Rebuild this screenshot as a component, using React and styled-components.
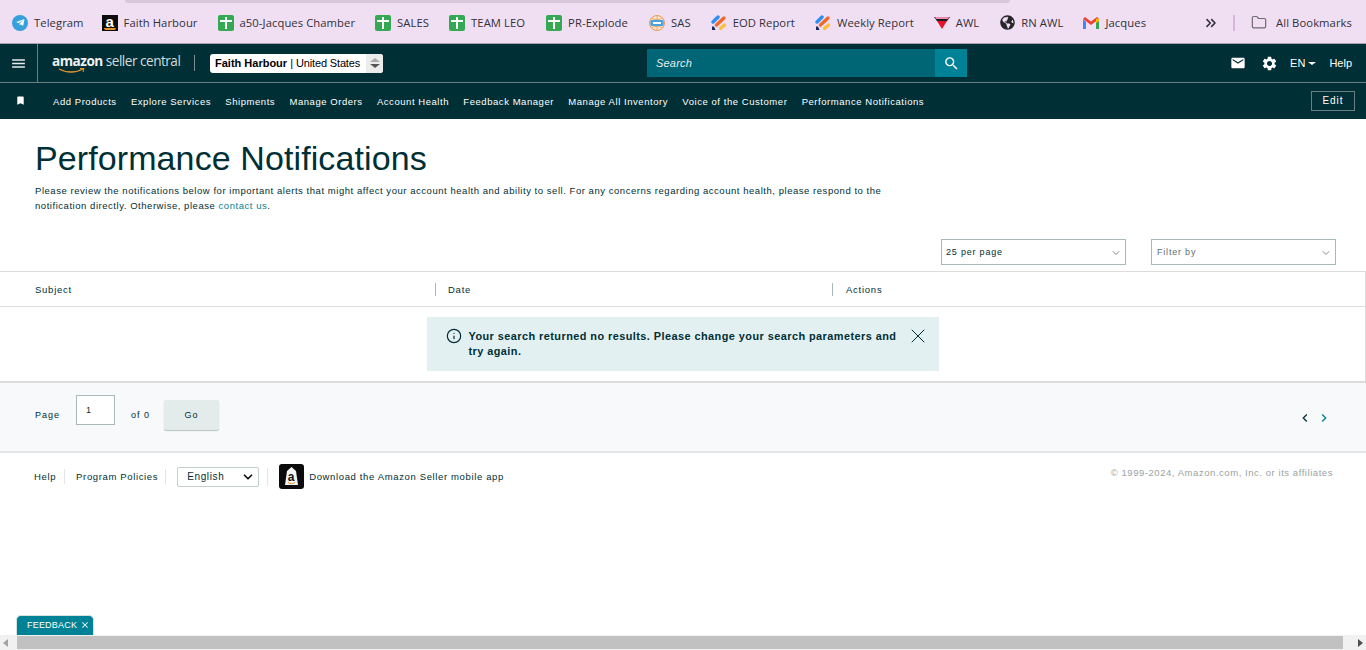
import styled, { createGlobalStyle } from 'styled-components';
import { MdEmail, MdSettings, MdSearch, MdMenu, MdBookmark, MdClose, MdChevronLeft, MdChevronRight } from 'react-icons/md';
import { FaGlobeAmericas, FaTelegramPlane } from 'react-icons/fa';
import { Folder, ChevronsRight, Info, X, ChevronDown } from 'lucide-react';

const GlobalStyle = createGlobalStyle`
  html, body {
    margin: 0;
    padding: 0;
    background: #fff;
    overflow: hidden;
  }
  * { box-sizing: border-box; }
`;

const Page = styled.div`
  position: relative;
  width: 1366px;
  height: 650px;
  display: flex;
  flex-direction: column;
  overflow: hidden;
  font-family: "Liberation Sans", Arial, sans-serif;
  color: #002f36;
`;

const BookmarkBar = styled.div`
  position: relative;
  height: 44px;
  flex: none;
  background: #f0dff3;
  border-bottom: 1px solid #a9a3ad;
  display: flex;
  align-items: center;
  padding: 2px 14px 0 12px;
  font-family: "Open Sans", sans-serif;
  font-size: 11.25px;
  letter-spacing: 0.07px;
  color: #33303a;
`;

const TabEdge = styled.div`
  position: absolute;
  top: 0;
  left: 125px;
  width: 885px;
  height: 3px;
  background: #d9c6dc;
  border-radius: 0 0 8px 8px;
`;

const Mark = styled.div`
  display: flex;
  align-items: center;
  gap: 6px;
  margin-right: ${(p) => p.$gap ?? 20}px;
  white-space: nowrap;
`;

const MarkIcon = styled.span`
  width: 16px;
  height: 16px;
  flex: none;
  display: flex;
  align-items: center;
  justify-content: center;
`;

const GreenTile = styled.span`
  width: 16px;
  height: 16px;
  background: #34a853;
  border-radius: 2px;
  display: block;
  position: relative;
  &::before {
    content: "";
    position: absolute;
    left: 2px;
    right: 2px;
    top: 5px;
    height: 2px;
    background: #fff;
  }
  &::after {
    content: "";
    position: absolute;
    left: 7px;
    top: 2px;
    bottom: 2px;
    width: 2px;
    background: #fff;
  }
`;

const TelegramDot = styled.span`
  width: 16px;
  height: 16px;
  border-radius: 50%;
  background: #37a0dc;
  color: #fff;
  font-size: 9px;
  display: flex;
  align-items: center;
  justify-content: center;
`;

const AmazonTile = styled.span`
  width: 16px;
  height: 16px;
  background: #0c0c0c;
  color: #fff;
  font: bold 15px/13px "Liberation Sans", sans-serif;
  display: block;
  text-align: center;
  position: relative;
  &::after {
    content: "";
    position: absolute;
    left: 2px;
    right: 2px;
    bottom: 1px;
    height: 2px;
    border-radius: 0 0 6px 6px;
    background: #e8932c;
  }
`;

const MoreBtn = styled.div`
  margin-left: auto;
  display: flex;
  align-items: center;
  color: #33303a;
`;

const BarDivider = styled.span`
  width: 2px;
  height: 16px;
  background: #dcb4de;
  margin: 0 16px 0 14px;
`;

const TopNav = styled.div`
  height: 39px;
  flex: none;
  background: #002f36;
  border-bottom: 1px solid #6c7f80;
  display: grid;
  grid-template-columns: 647px 320px 1fr;
  align-items: center;
  color: #fff;
`;

const NavLeft = styled.div`
  display: flex;
  align-items: center;
  height: 100%;
`;

const Burger = styled.div`
  width: 38px;
  height: 100%;
  border-right: 1px solid #6c7f80;
  display: flex;
  align-items: center;
  justify-content: center;
  color: #e6eaea;
`;

const Logo = styled.div`
  position: relative;
  margin-left: 14px;
  width: 129px;
  height: 24px;
  font-family: "Open Sans", sans-serif;
  font-size: 13.6px;
  line-height: 18px;
  letter-spacing: -0.5px;
  color: #d3dcdc;
  white-space: nowrap;
  padding-top: 1px;
  b { font-weight: 700; color: #eef2f2; }
  svg { position: absolute; left: 6px; top: 17px; }
`;

const LogoRule = styled.span`
  width: 1px;
  height: 16px;
  background: #7c8f90;
  margin: 0 15px 0 13px;
`;

const AccountPick = styled.div`
  width: 173px;
  height: 19px;
  background: #fff;
  border-radius: 3px;
  color: #000;
  font-size: 11px;
  display: flex;
  align-items: center;
  padding-left: 5px;
  position: relative;
  white-space: nowrap;
  b { font-weight: 700; margin-right: 3px; }
  span { margin-left: 3px; letter-spacing: -0.15px; }
`;

const Stepper = styled.div`
  position: absolute;
  right: 0;
  top: 0;
  bottom: 0;
  width: 17px;
  background: #ececec;
  border-radius: 0 3px 3px 0;
  display: flex;
  flex-direction: column;
  align-items: center;
  justify-content: center;
  gap: 2px;
`;

const Tri = styled.i`
  width: 0;
  height: 0;
  border-left: 5px solid transparent;
  border-right: 5px solid transparent;
  ${(p) => (p.$up ? 'border-bottom: 4px solid #aaa;' : 'border-top: 4px solid #555;')}
`;

const Search = styled.div`
  height: 28px;
  background: #006574;
  display: flex;
  align-items: stretch;
  font-size: 11px;
  font-style: italic;
  letter-spacing: 0.2px;
  color: #e6eeee;
`;

const SearchText = styled.div`
  flex: 1;
  display: flex;
  align-items: center;
  padding-left: 9px;
`;

const SearchBtn = styled.div`
  width: 32px;
  background: #008296;
  display: flex;
  align-items: center;
  justify-content: center;
  color: #fff;
`;

const NavRight = styled.div`
  display: flex;
  align-items: center;
  justify-content: flex-end;
  padding-right: 14px;
  font-size: 11px;
`;

const Lang = styled.span`
  display: flex;
  align-items: center;
  gap: 3px;
  margin: 0 13px 0 12px;
`;

const Caret = styled.i`
  width: 0;
  height: 0;
  border-left: 4px solid transparent;
  border-right: 4px solid transparent;
  border-top: 3px solid #fff;
`;

const SubNav = styled.div`
  height: 36px;
  flex: none;
  background: #002f36;
  display: flex;
  align-items: center;
  padding: 1px 11px 0 15px;
  color: #fff;
  font-size: 9.5px;
  letter-spacing: 0.55px;
  white-space: nowrap;
`;

const Pin = styled.span`
  display: flex;
  width: 38px;
  margin-top: -3px;
`;

const NavLink = styled.a`
  margin-right: 14.3px;
`;

const EditBtn = styled.div`
  margin-left: auto;
  width: 44px;
  height: 20px;
  border: 1px solid #6c7f80;
  display: flex;
  align-items: center;
  justify-content: center;
  font-size: 10px;
  letter-spacing: 1px;
  margin-top: -2px;
`;

const Header = styled.div`
  padding: 18px 34px 0 35px;
`;

const Title = styled.h1`
  margin: 0;
  font-size: 34px;
  line-height: 42px;
  font-weight: 400;
  letter-spacing: 0.1px;
  color: #002f36;
`;

const Intro = styled.p`
  margin: 4px 0 0 0;
  width: 850px;
  font-size: 9.5px;
  line-height: 15px;
  letter-spacing: 0.54px;
  color: #002f36;
  a { color: #008296; }
`;

const Filters = styled.div`
  display: flex;
  justify-content: flex-end;
  gap: 25px;
  padding: 26px 30px 6px 0;
`;

const Pick = styled.div`
  width: 185px;
  height: 26px;
  border: 1px solid #a9b8b8;
  display: flex;
  align-items: center;
  justify-content: space-between;
  padding: 0 3px 0 ${(p) => p.$pad ?? 4}px;
  font-size: 9px;
  letter-spacing: 0.8px;
  color: ${(p) => p.$color ?? '#002f36'};
  svg { color: #7f8f90; margin-top: 2px; }
`;

const Table = styled.div`
  border: 1px solid #dcdcdc;
  border-bottom-width: 2px;
  border-left: 0;
`;

const HeadRow = styled.div`
  height: 35px;
  display: flex;
  align-items: center;
  border-bottom: 1px solid #d9dede;
  font-size: 9.5px;
  letter-spacing: 0.75px;
`;

const HeadCell = styled.div`
  width: ${(p) => p.$w}px;
  display: flex;
  align-items: center;
  height: 13px;
  padding-left: ${(p) => p.$pad ?? 12}px;
  border-left: ${(p) => (p.$rule ? '1px solid #a9b8b8' : '0')};
`;

const BodyRow = styled.div`
  height: 74px;
  display: flex;
  justify-content: center;
  padding-top: 10px;
`;

const Alert = styled.div`
  width: 512px;
  height: 54px;
  background: #e3f0f2;
  display: flex;
  align-items: flex-start;
  padding: 12px 0 0 19px;
  font-size: 10.9px;
  font-weight: 700;
  line-height: 15px;
  letter-spacing: 0.45px;
  color: #002f36;
  > svg { margin-top: -1px; flex: none; }
`;

const AlertText = styled.div`
  width: 433px;
  margin-left: 7px;
`;

const AlertClose = styled.div`
  margin: -5px 0 0 4px;
  display: flex;
`;

const Pager = styled.div`
  height: 70px;
  flex: none;
  background: #f7f9fa;
  border-bottom: 2px solid #e3e6e8;
  display: flex;
  align-items: center;
  padding: 0 34px 4px 35px;
  font-size: 9px;
  letter-spacing: 1px;
`;

const PageBox = styled.div`
  width: 39px;
  height: 30px;
  background: #fff;
  border: 1px solid #a9b8b8;
  margin: -10px 16px 0 16px;
  padding: 9px 0 0 9px;
`;

const GoBtn = styled.div`
  width: 55px;
  height: 30px;
  margin-left: 14px;
  background: #e3ebeb;
  border-radius: 2px;
  box-shadow: 0 1px 1px #b8c4c4;
  display: flex;
  align-items: center;
  justify-content: center;
`;

const Arrows = styled.div`
  margin-left: auto;
  display: flex;
  gap: 3px;
  margin-top: 6px;
`;

const Arrow = styled.span`
  display: flex;
  color: ${(p) => p.$color};
`;

const Footer = styled.div`
  display: flex;
  justify-content: space-between;
  align-items: flex-start;
  padding: 11px 33px 0 34px;
  font-size: 9.5px;
  letter-spacing: 0.64px;
`;

const FooterLeft = styled.div`
  display: flex;
  align-items: center;
`;

const FooterLink = styled.span`
  padding-right: ${(p) => p.$right ?? 8}px;
  margin-right: ${(p) => p.$margin ?? 11}px;
  border-right: 1px solid #e3e6e6;
  line-height: 15px;
`;

const LangPick = styled.div`
  width: 82px;
  height: 20px;
  border: 1px solid #c5cccc;
  border-radius: 2px;
  display: flex;
  align-items: center;
  justify-content: space-between;
  padding: 0 3px 0 9px;
  font-size: 10px;
  color: #002f36;
  margin-right: 8px;
`;

const FooterRule = styled.span`
  width: 1px;
  height: 18px;
  background: #e3e6e6;
  margin-right: 11px;
`;

const AppTile = styled.span`
  width: 25px;
  height: 25px;
  border-radius: 3px;
  background: #0b0b0b;
  display: flex;
  align-items: center;
  justify-content: center;
  margin-right: 5px;
`;

const Copy = styled.div`
  color: #9aa2a2;
  font-size: 9.5px;
  letter-spacing: 0.55px;
  margin-top: 3px;
`;

const Spacer = styled.div`
  flex: 1;
`;

const Scrollbar = styled.div`
  height: 15px;
  flex: none;
  background: #f1f1f1;
  display: flex;
  align-items: center;
  justify-content: space-between;
  padding: 0 3px;
`;

const Thumb = styled.div`
  position: absolute;
  left: 17px;
  right: 23px;
  bottom: 1px;
  height: 13px;
  background: #c1c1c1;
`;

const ScrollArrow = styled.i`
  width: 0;
  height: 0;
  border-top: 4px solid transparent;
  border-bottom: 4px solid transparent;
  ${(p) => (p.$right ? 'border-left: 5px solid #505050;' : 'border-right: 5px solid #a3a3a3;')}
`;

const FeedbackTab = styled.div`
  position: absolute;
  left: 16px;
  bottom: 15px;
  width: 78px;
  height: 20px;
  background: #008296;
  border: 1px solid #d5e2e4;
  border-bottom: 0;
  border-radius: 5px 5px 0 0;
  color: #fff;
  font-size: 9px;
  letter-spacing: 0.2px;
  display: flex;
  align-items: center;
  padding: 0 0 2px 10px;
  gap: 3px;
`;

const greenMarks = [
  { label: 'a50-Jacques Chamber', gap: 20 },
  { label: 'SALES', gap: 20 },
  { label: 'TEAM LEO', gap: 21 },
  { label: 'PR-Explode', gap: 21 },
];

const navItems = [
  'Add Products',
  'Explore Services',
  'Shipments',
  'Manage Orders',
  'Account Health',
  'Feedback Manager',
  'Manage All Inventory',
  'Voice of the Customer',
  'Performance Notifications',
];

function SasIcon() {
  return (
    <svg width="16" height="16" viewBox="0 0 16 16">
      <circle cx="8" cy="8" r="7.5" fill="#fbe3cc" stroke="#e89a5c" />
      <path d="M8 1V15M1 8H15M3 3.5C6 5 10 5 13 3.5M3 12.5C6 11 10 11 13 12.5" stroke="#e89a5c" fill="none" strokeWidth="0.8" />
      <rect x="1.5" y="5" width="13" height="6" rx="1" fill="#4ba3dd" />
      <rect x="4" y="7" width="8" height="2" fill="#fff" />
    </svg>
  );
}

function ReportIcon() {
  return (
    <svg width="16" height="16" viewBox="0 0 16 16">
      <path d="M1 15V11.5L3 11.5 4.5 15Z" fill="#1a2a5e" />
      <path d="M2 7L7 2" stroke="#2f8ef4" strokeWidth="3.4" strokeLinecap="round" />
      <path d="M5.5 10L13 3" stroke="#f2692c" strokeWidth="3.4" strokeLinecap="round" />
      <path d="M9.5 13.5L13.5 10" stroke="#fbbf3a" strokeWidth="3.4" strokeLinecap="round" />
    </svg>
  );
}

function AwlIcon() {
  return (
    <svg width="16" height="14" viewBox="0 0 16 14">
      <path d="M0 1H16L13 5H3Z" fill="#1a1a1a" />
      <path d="M1 1H15L14 3H2Z" fill="#ef8bb0" />
      <path d="M3 5H13L8 13Z" fill="#e4142c" />
    </svg>
  );
}

function GmailIcon() {
  return (
    <svg width="16" height="12" viewBox="0 0 16 12">
      <path d="M0 2V12H3V5Z" fill="#4285f4" />
      <path d="M13 5V12H16V2Z" fill="#34a853" />
      <path d="M0 2L8 8 16 2 14 0 8 4.5 2 0Z" fill="#ea4335" />
      <path d="M13 1.5L16 2V4L13 6Z" fill="#fbbc04" />
    </svg>
  );
}

function App() {
  return (
    <Page>
      <GlobalStyle />
      <BookmarkBar>
        <TabEdge />
        <Mark $gap={18}>
          <MarkIcon><TelegramDot><FaTelegramPlane /></TelegramDot></MarkIcon>
          Telegram
        </Mark>
        <Mark>
          <MarkIcon><AmazonTile>a</AmazonTile></MarkIcon>
          Faith Harbour
        </Mark>
        {greenMarks.map((mark) => (
          <Mark key={mark.label} $gap={mark.gap}>
            <MarkIcon><GreenTile /></MarkIcon>
            {mark.label}
          </Mark>
        ))}
        <Mark>
          <MarkIcon><SasIcon /></MarkIcon>
          SAS
        </Mark>
        <Mark>
          <MarkIcon><ReportIcon /></MarkIcon>
          EOD Report
        </Mark>
        <Mark>
          <MarkIcon><ReportIcon /></MarkIcon>
          Weekly Report
        </Mark>
        <Mark>
          <MarkIcon><AwlIcon /></MarkIcon>
          AWL
        </Mark>
        <Mark>
          <MarkIcon><FaGlobeAmericas size={15} color="#26262b" /></MarkIcon>
          RN AWL
        </Mark>
        <Mark>
          <MarkIcon><GmailIcon /></MarkIcon>
          Jacques
        </Mark>
        <MoreBtn>
          <ChevronsRight size={16} strokeWidth={2.4} />
          <BarDivider />
        </MoreBtn>
        <Mark $gap={0}>
          <MarkIcon><Folder size={17} color="#6f6b72" strokeWidth={1.8} /></MarkIcon>
          &nbsp;All Bookmarks
        </Mark>
      </BookmarkBar>

      <TopNav>
        <NavLeft>
          <Burger><MdMenu size={17} /></Burger>
          <Logo>
            <b>amazon</b> seller central
            <svg width="27" height="6" viewBox="0 0 27 6">
              <path d="M1 1C8 5 18 5 25 1" fill="none" stroke="#e8932c" strokeWidth="1.3" />
              <path d="M22 0.5L26 0.5 25 4" fill="none" stroke="#e8932c" strokeWidth="1" />
            </svg>
          </Logo>
          <LogoRule />
          <AccountPick>
            <b>Faith Harbour</b> | <span>United States</span>
            <Stepper><Tri $up /><Tri /></Stepper>
          </AccountPick>
        </NavLeft>
        <Search>
          <SearchText>Search</SearchText>
          <SearchBtn><MdSearch size={17} /></SearchBtn>
        </Search>
        <NavRight>
          <MdEmail size={16} />
          <MdSettings size={17} style={{ marginLeft: 15 }} />
          <Lang>EN <Caret /></Lang>
          Help
        </NavRight>
      </TopNav>

      <SubNav>
        <Pin><MdBookmark size={11} /></Pin>
        {navItems.map((item) => (
          <NavLink key={item}>{item}</NavLink>
        ))}
        <EditBtn>Edit</EditBtn>
      </SubNav>

      <Header>
        <Title>Performance Notifications</Title>
        <Intro>
          Please review the notifications below for important alerts that might affect your account health and ability to sell. For any concerns regarding account health, please respond to the notification directly. Otherwise, please <a>contact us</a>.
        </Intro>
      </Header>

      <Filters>
        <Pick>25 per page <ChevronDown size={12} /></Pick>
        <Pick $pad={5} $color="#5f7072">Filter by <ChevronDown size={12} /></Pick>
      </Filters>

      <Table>
        <HeadRow>
          <HeadCell $w={435} $pad={35}>Subject</HeadCell>
          <HeadCell $w={397} $rule>Date</HeadCell>
          <HeadCell $w={400} $rule $pad={13}>Actions</HeadCell>
        </HeadRow>
        <BodyRow>
          <Alert>
            <Info size={16} strokeWidth={1.8} />
            <AlertText>Your search returned no results. Please change your search parameters and try again.</AlertText>
            <AlertClose><X size={24} strokeWidth={1} /></AlertClose>
          </Alert>
        </BodyRow>
      </Table>

      <Pager>
        Page
        <PageBox>1</PageBox>
        of 0
        <GoBtn>Go</GoBtn>
        <Arrows>
          <Arrow $color="#002f36"><MdChevronLeft size={16} /></Arrow>
          <Arrow $color="#008296"><MdChevronRight size={16} /></Arrow>
        </Arrows>
      </Pager>

      <Footer>
        <FooterLeft>
          <FooterLink>Help</FooterLink>
          <FooterLink $right={7} $margin={11}>Program Policies</FooterLink>
          <LangPick>English <ChevronDown size={14} strokeWidth={3} color="#111" /></LangPick>
          <FooterRule />
          <AppTile>
            <svg width="15" height="21" viewBox="0 0 15 21">
              <path d="M3 5L7.5 1 12 5 14 19H1Z" fill="#f4f4f4" />
              <text x="7.5" y="15" fontSize="12" fontWeight="700" textAnchor="middle" fill="#111">a</text>
              <path d="M4 16.5C6 18 9 18 11 16.5" stroke="#e8932c" fill="none" />
            </svg>
          </AppTile>
          Download the Amazon Seller mobile app
        </FooterLeft>
        <Copy>© 1999-2024, Amazon.com, Inc. or its affiliates</Copy>
      </Footer>

      <Spacer />
      <Scrollbar>
        <ScrollArrow />
        <ScrollArrow $right />
      </Scrollbar>
      <Thumb />
      <FeedbackTab>FEEDBACK <MdClose size={10} /></FeedbackTab>
    </Page>
  );
}

export default App;
